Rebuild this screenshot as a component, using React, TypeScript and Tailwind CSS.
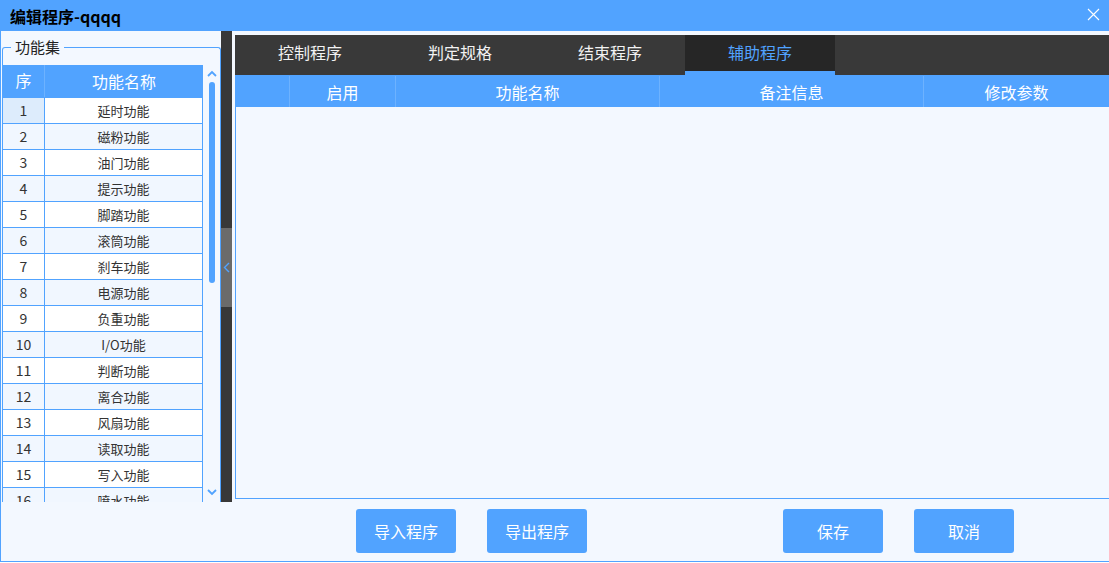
import React from 'react';

const funcs = [
  '延时功能', '磁粉功能', '油门功能', '提示功能', '脚踏功能', '滚筒功能', '刹车功能', '电源功能',
  '负重功能', 'I/O功能', '判断功能', '离合功能', '风扇功能', '读取功能', '写入功能', '喷水功能',
];

const tabs = ['控制程序', '判定规格', '结束程序', '辅助程序'];

const FONT = "font-['Microsoft_YaHei','Noto_Sans_CJK_SC',sans-serif]";

const App: React.FC = () => {
  return (
    <div className={`w-[1109px] h-[562px] flex flex-col bg-[#f3f8ff] border-l border-b border-[#51a3ff] ${FONT}`}>
      {/* Title bar */}
      <div className="h-[31px] shrink-0 bg-[#51a3ff] flex items-center justify-between pl-[9px] pr-[9px]">
        <span className="text-[16px] font-bold text-black leading-none">编辑程序-qqqq</span>
        <svg width="13" height="13" viewBox="0 0 13 13" className="mb-[3px]">
          <path d="M1 1 L12 12 M12 1 L1 12" stroke="#ffffff" strokeWidth="1.1" />
        </svg>
      </div>

      <div className="flex h-[471px] shrink-0">
        {/* Left: function set */}
        <div className="w-[220px] shrink-0 relative pt-[16px] pl-px">
          <div className="h-full border-t border-r border-l border-[#51a3ff] rounded-tr-[3px] rounded-tl-[3px] pt-[17px] flex flex-col">
            <div className="flex h-[438px] overflow-hidden">
              <div className="w-[200px] shrink-0 flex flex-col overflow-hidden">
                <div className="h-[32px] shrink-0 flex bg-[#51a3ff] text-white text-[16px] overflow-hidden">
                  <div className="w-[42px] h-[32px] border-r border-[#6db2ff] overflow-hidden flex flex-col items-center pt-[3px] leading-[24px]">
                    <span>序</span>
                    <span>号</span>
                  </div>
                  <div className="flex-1 flex items-center justify-center">功能名称</div>
                </div>
                {funcs.map((f, i) => (
                  <div
                    key={f}
                    className={`h-[26px] shrink-0 flex border-t border-[#51a3ff] text-[14px] text-[#333] ${i % 2 === 1 ? 'bg-[#f1f7ff]' : 'bg-white'}`}
                  >
                    <div className={`w-[42px] border-r border-[#51a3ff] flex items-center justify-center ${i === 0 ? 'bg-[#ddecfc]' : ''}`}>
                      {i + 1}
                    </div>
                    <div className="flex-1 flex items-center justify-center text-[13px] border-r border-[#51a3ff]">{f}</div>
                  </div>
                ))}
              </div>
              {/* Scrollbar */}
              <div className="w-[17px] shrink-0 bg-[#f3f8ff] flex flex-col items-center">
                <svg width="10" height="7" viewBox="0 0 10 7" className="mt-[5px]">
                  <path d="M1 6 L5 2 L9 6" stroke="#51a3ff" strokeWidth="1.8" fill="none" />
                </svg>
                <div className="w-[6px] h-[201px] mt-[5px] rounded-full bg-[#51a3ff]" />
                <div className="flex-1" />
                <svg width="10" height="7" viewBox="0 0 10 7" className="mb-[6px]">
                  <path d="M1 1 L5 5 L9 1" stroke="#51a3ff" strokeWidth="1.8" fill="none" />
                </svg>
              </div>
            </div>
          </div>
          <span className="absolute left-[10px] top-[6px] px-[4px] bg-[#f3f8ff] text-[15px] text-[#222] leading-[20px]">功能集</span>
        </div>

        {/* Splitter */}
        <div className="w-[11px] shrink-0 bg-[#383838] flex flex-col">
          <div className="h-[197px]" />
          <div className="h-[79px] bg-[#6b6b6b] flex items-center justify-center">
            <svg width="7" height="11" viewBox="0 0 7 11">
              <path d="M6 1 L1.5 5.5 L6 10" stroke="#51a3ff" strokeWidth="1.4" fill="none" />
            </svg>
          </div>
        </div>

        {/* Right content */}
        <div className="flex-1 pl-[3px] pt-[4px] flex flex-col">
          <div className="h-[40px] shrink-0 bg-[#393939] flex">
            {tabs.map((t, i) =>
              i === 3 ? (
                <div key={t} className="w-[150px] bg-[#262626] border-b-[4px] border-[#51a3ff] flex items-center justify-center text-[16px] text-[#51a3ff] pb-[2px]">
                  {t}
                </div>
              ) : (
                <div key={t} className="w-[150px] flex items-center justify-center text-[16px] text-[#f2f2f2] pb-[6px]">
                  {t}
                </div>
              )
            )}
          </div>
          <div className="h-[424px] border-l border-b border-[#51a3ff] flex flex-col">
            <div className="h-[32px] shrink-0 bg-[#51a3ff] border-t border-[#51a3ff] flex text-white text-[16px]">
              <div className="w-[54px] border-r border-[#6db2ff]" />
              <div className="w-[106px] border-r border-[#6db2ff] flex items-center justify-center">启用</div>
              <div className="w-[264px] border-r border-[#6db2ff] flex items-center justify-center">功能名称</div>
              <div className="w-[264px] border-r border-[#6db2ff] flex items-center justify-center">备注信息</div>
              <div className="flex-1 flex items-center justify-center">修改参数</div>
            </div>
            <div className="flex-1 bg-[#f3f8ff]" />
          </div>
        </div>
      </div>

      {/* Bottom buttons */}
      <div className="flex-1 flex items-start pt-[7px] pl-[355px] text-[16px] text-white">
        <button className="w-[100px] h-[44px] rounded-[3px] bg-[#51a3ff]">导入程序</button>
        <button className="w-[100px] h-[44px] rounded-[3px] bg-[#51a3ff] ml-[31px]">导出程序</button>
        <button className="w-[100px] h-[44px] rounded-[3px] bg-[#51a3ff] ml-[196px]">保存</button>
        <button className="w-[100px] h-[44px] rounded-[3px] bg-[#51a3ff] ml-[31px]">取消</button>
      </div>
    </div>
  );
};

export default App;
